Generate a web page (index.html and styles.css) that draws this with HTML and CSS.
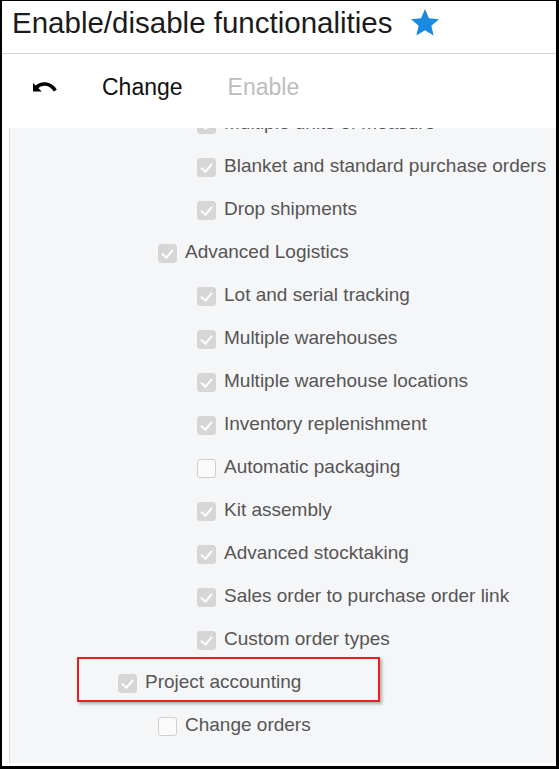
FILE: index.html
```html
<!DOCTYPE html>
<html>
<head>
<meta charset="utf-8">
<link rel="stylesheet" href="styles.css">
</head>
<body>
<div class="frame">
  <div class="header">
    <h1 class="title">Enable/disable functionalities</h1>
    <svg class="star" viewBox="2 2 20 19.3" width="28" height="27"><path fill="#1a8ae0" d="M12 17.27L18.18 21l-1.64-7.03L22 9.24l-7.19-.61L12 2 9.19 8.63 2 9.24l5.46 4.73L5.82 21z"/></svg>
  </div>
  <div class="toolbar">
    <svg class="undo" viewBox="0 0 24 11" width="24" height="11"><path d="M3.2 6.6C8 1.6 17 1.2 22.3 9.6" fill="none" stroke="#000" stroke-width="3.6"/><polygon points="0,2 0,10.5 8.8,10.5" fill="#000"/></svg>
    <span class="tb-btn">Change</span>
    <span class="tb-btn disabled">Enable</span>
  </div>
  <div class="panel">
    <div class="list">
      <div class="row l3"><span class="cb on"></span><span class="lbl">Multiple units of measure</span></div>
      <div class="row l3"><span class="cb on"></span><span class="lbl">Blanket and standard purchase orders</span></div>
      <div class="row l3"><span class="cb on"></span><span class="lbl">Drop shipments</span></div>
      <div class="row l2"><span class="cb on"></span><span class="lbl">Advanced Logistics</span></div>
      <div class="row l3"><span class="cb on"></span><span class="lbl">Lot and serial tracking</span></div>
      <div class="row l3"><span class="cb on"></span><span class="lbl">Multiple warehouses</span></div>
      <div class="row l3"><span class="cb on"></span><span class="lbl">Multiple warehouse locations</span></div>
      <div class="row l3"><span class="cb on"></span><span class="lbl">Inventory replenishment</span></div>
      <div class="row l3"><span class="cb"></span><span class="lbl">Automatic packaging</span></div>
      <div class="row l3"><span class="cb on"></span><span class="lbl">Kit assembly</span></div>
      <div class="row l3"><span class="cb on"></span><span class="lbl">Advanced stocktaking</span></div>
      <div class="row l3"><span class="cb on"></span><span class="lbl">Sales order to purchase order link</span></div>
      <div class="row l3"><span class="cb on"></span><span class="lbl">Custom order types</span></div>
      <div class="row l1"><span class="cb on"></span><span class="lbl">Project accounting</span></div>
      <div class="row l2"><span class="cb"></span><span class="lbl">Change orders</span></div>
    </div>
  </div>
  <div class="highlight"></div>
</div>
</body>
</html>
```
FILE: styles.css
```css
html, body {
  margin: 0;
  padding: 0;
  background: #000;
}
.frame {
  position: relative;
  width: 559px;
  height: 769px;
  box-sizing: border-box;
  border-left: 2px solid #000;
  border-top: 1px solid #000;
  border-right: 3px solid #000;
  border-bottom: 3px solid #000;
  background: #fff;
  font-family: "Liberation Sans", Arial, sans-serif;
  display: flex;
  flex-direction: column;
  overflow: hidden;
}
.header {
  height: 53px;
  box-sizing: border-box;
  display: flex;
  align-items: center;
  padding-left: 10px;
  padding-bottom: 8px;
  border-bottom: 1px solid #d3d3d3;
  flex-shrink: 0;
}
.title {
  margin: 0;
  font-weight: normal;
  font-size: 29.5px;
  color: #1b1b1b;
}
.star {
  margin-left: 19px;
  margin-top: -1px;
}
.toolbar {
  height: 74px;
  box-sizing: border-box;
  display: flex;
  align-items: center;
  padding-left: 31px;
  padding-bottom: 8px;
  flex-shrink: 0;
}
.undo {
  margin-right: 45px;
  margin-top: -1px;
}
.tb-btn {
  font-size: 23px;
  color: #111;
  margin-right: 45px;
}
.tb-btn.disabled {
  color: #bdbdbd;
}
.panel {
  flex: 1;
  margin-left: 7px;
  margin-bottom: 3px;
  background: #f5f6f8;
  border-left: 1px solid #d8d8d8;
  overflow: hidden;
}
.list {
  margin-top: -26px;
}
.row {
  height: 42.95px;
  display: flex;
  align-items: center;
  font-size: 19px;
  color: #555;
}
.row.l1 { padding-left: 108px; }
.row.l2 { padding-left: 148px; }
.row.l3 { padding-left: 187px; }
.cb {
  width: 19px;
  height: 19px;
  box-sizing: border-box;
  border-radius: 3px;
  border: 1px solid #cfcfcf;
  background: #fafafa;
  margin-right: 8px;
  margin-top: 3px;
  flex-shrink: 0;
  position: relative;
}
.cb.on {
  background: #d6d6d6;
  border-color: #d6d6d6;
}
.cb.on::after {
  content: "";
  position: absolute;
  left: 5px;
  top: 2px;
  width: 5px;
  height: 9px;
  border-right: 2px solid #fff;
  border-bottom: 2px solid #fff;
  transform: rotate(40deg);
}
.highlight {
  position: absolute;
  left: 75px;
  top: 656px;
  width: 303px;
  height: 45px;
  box-sizing: border-box;
  border: 2px solid #ec1c24;
  box-shadow: 2px 2px 3px rgba(0, 0, 0, 0.3);
}
```
